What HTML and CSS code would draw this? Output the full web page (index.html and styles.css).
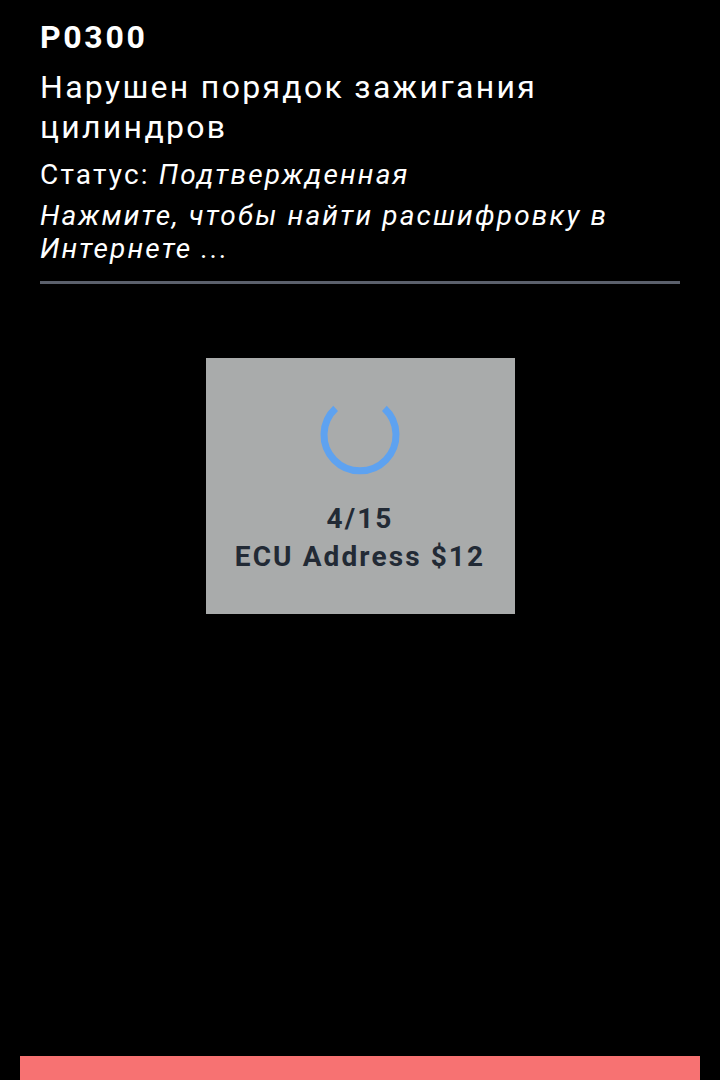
FILE: index.html
```html
<!DOCTYPE html>
<html lang="ru">
<head>
<meta charset="utf-8">
<title>P0300</title>
<link rel="stylesheet" href="styles.css">
</head>
<body>
<div class="page">
  <header class="dtc">
    <div class="dtc-code">P0300</div>
    <div class="dtc-title">Нарушен порядок зажигания цилиндров</div>
    <div class="dtc-status">Статус: <em>Подтвержденная</em></div>
    <div class="dtc-link"><em>Нажмите, чтобы найти расшифровку в Интернете ...</em></div>
  </header>
  <div class="divider"></div>
  <div class="progress">
    <svg class="spinner" width="80" height="80" viewBox="0 0 80 80">
      <path d="M 15.6 13.4 A 36 36 0 1 0 64.4 13.4" fill="none" stroke="#5ea2f0" stroke-width="7" stroke-linecap="butt"/>
    </svg>
    <div class="progress-text">
      <div>4/15</div>
      <div>ECU Address $12</div>
    </div>
  </div>
  <div class="action-bar"></div>
</div>
</body>
</html>
```

FILE: styles.css
```css
html, body {
  margin: 0;
  padding: 0;
  background: #000;
}
.page {
  height: 1080px;
  overflow: hidden;
  display: flex;
  flex-direction: column;
  color: #fff;
  font-family: Roboto, "Noto Sans", sans-serif;
}
.dtc {
  padding: 17px 40px 0 40px;
  display: flex;
  flex-direction: column;
}
.dtc-code {
  font-size: 32px;
  line-height: 40px;
  font-weight: 700;
  letter-spacing: 0.084em;
}
.dtc-title {
  margin-top: 10px;
  font-size: 32px;
  line-height: 40px;
  font-weight: 400;
  letter-spacing: 0.072em;
}
.dtc-status, .dtc-link {
  font-size: 28px;
  letter-spacing: 0.077em;
}
.dtc-status {
  margin-top: 11px;
  line-height: 33px;
}
.dtc-link {
  margin-top: 9px;
  line-height: 32.5px;
}
.dtc em {
  font-style: italic;
}
.divider {
  margin: 16px 40px 0 40px;
  height: 3px;
  background: #5b606c;
}
.progress {
  margin: 74px auto 0 auto;
  width: 309px;
  height: 256px;
  background: #a9abab;
  display: flex;
  flex-direction: column;
  align-items: center;
  box-sizing: border-box;
  padding-top: 37px;
}
.spinner {
  display: block;
}
.progress-text {
  margin-top: 25px;
  text-align: center;
  color: #222a35;
  font-size: 28px;
  line-height: 38px;
  font-weight: 700;
  letter-spacing: 0.075em;
}
.action-bar {
  margin: auto 20px 0 20px;
  height: 24px;
  background: #f77272;
}
```
